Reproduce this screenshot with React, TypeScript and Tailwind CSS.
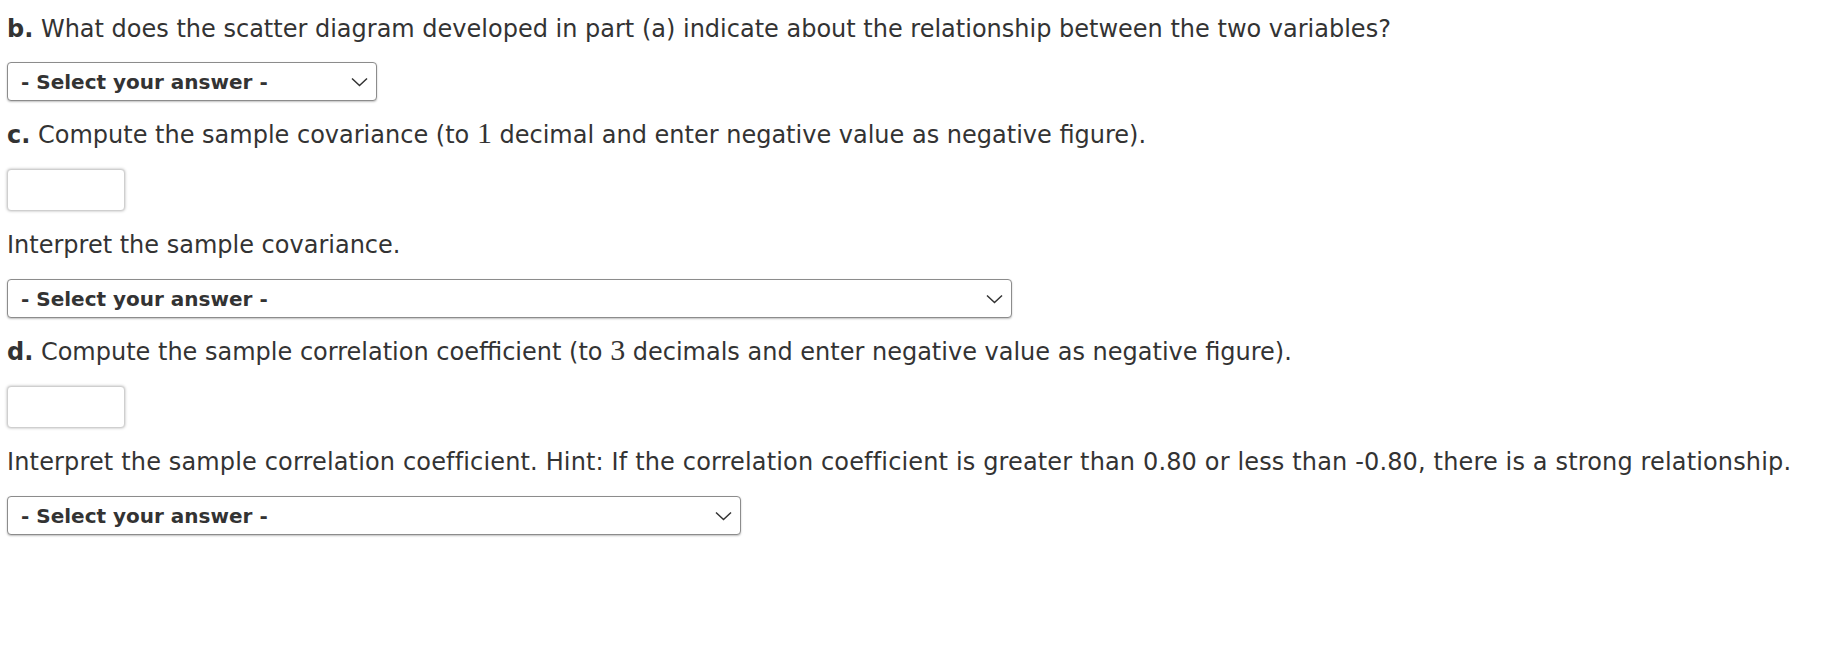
import React from "react";

const font = { fontFamily: '"DejaVu Sans", Verdana, sans-serif' };

function Chevron() {
  return (
    <svg width="17" height="10" viewBox="0 0 17 10" className="shrink-0">
      <path d="M1 1.5 L8.5 8.5 L16 1.5" fill="none" stroke="#333" strokeWidth="1.5" />
    </svg>
  );
}

function Select({ w }: { w: string }) {
  return (
    <div
      className={`${w} h-[39px] flex items-center justify-between pl-[13px] pr-[8px] bg-white border border-[#8c8c8c] rounded-[4px] shadow-[0_1px_2px_rgba(0,0,0,0.25)] text-[20px] leading-[24px] font-bold text-[#333]`}
    >
      <span>- Select your answer -</span>
      <Chevron />
    </div>
  );
}

function Input() {
  return (
    <div className="w-[118px] h-[42px] bg-white border border-[#cfcfcf] rounded-[4px] shadow-[0_0_3px_rgba(0,0,0,0.3)]" />
  );
}

function Math({ children }: { children: React.ReactNode }) {
  return (
    <span className="text-[30px] leading-[20px]" style={{ fontFamily: '"Liberation Serif", "DejaVu Serif", serif' }}>
      {children}
    </span>
  );
}

export default function App() {
  return (
    <div className="w-[1830px] h-[648px] bg-white text-[#333] pl-[7px] pt-[14px]" style={font}>
      <div className="flex flex-col items-start gap-[20px] text-[24px] leading-[28px]">
        <div className="h-[28px] pt-[1px] whitespace-nowrap">
          <b>b.</b> What does the scatter diagram developed in part (a) indicate about the relationship between the two variables?
        </div>
        <Select w="w-[370px]" />
        <div className="h-[28px] whitespace-nowrap">
          <b>c.</b> Compute the sample covariance (to <Math>1</Math> decimal and enter negative value as negative figure).
        </div>
        <Input />
        <div className="h-[28px] whitespace-nowrap">Interpret the sample covariance.</div>
        <Select w="w-[1005px]" />
        <div className="h-[28px] whitespace-nowrap">
          <b>d.</b> Compute the sample correlation coefficient (to <Math>3</Math> decimals and enter negative value as negative figure).
        </div>
        <Input />
        <div className="h-[28px] whitespace-nowrap tracking-[0.15px]">
          Interpret the sample correlation coefficient. Hint: If the correlation coefficient is greater than 0.80 or less than -0.80, there is a strong relationship.
        </div>
        <Select w="w-[734px]" />
      </div>
    </div>
  );
}
